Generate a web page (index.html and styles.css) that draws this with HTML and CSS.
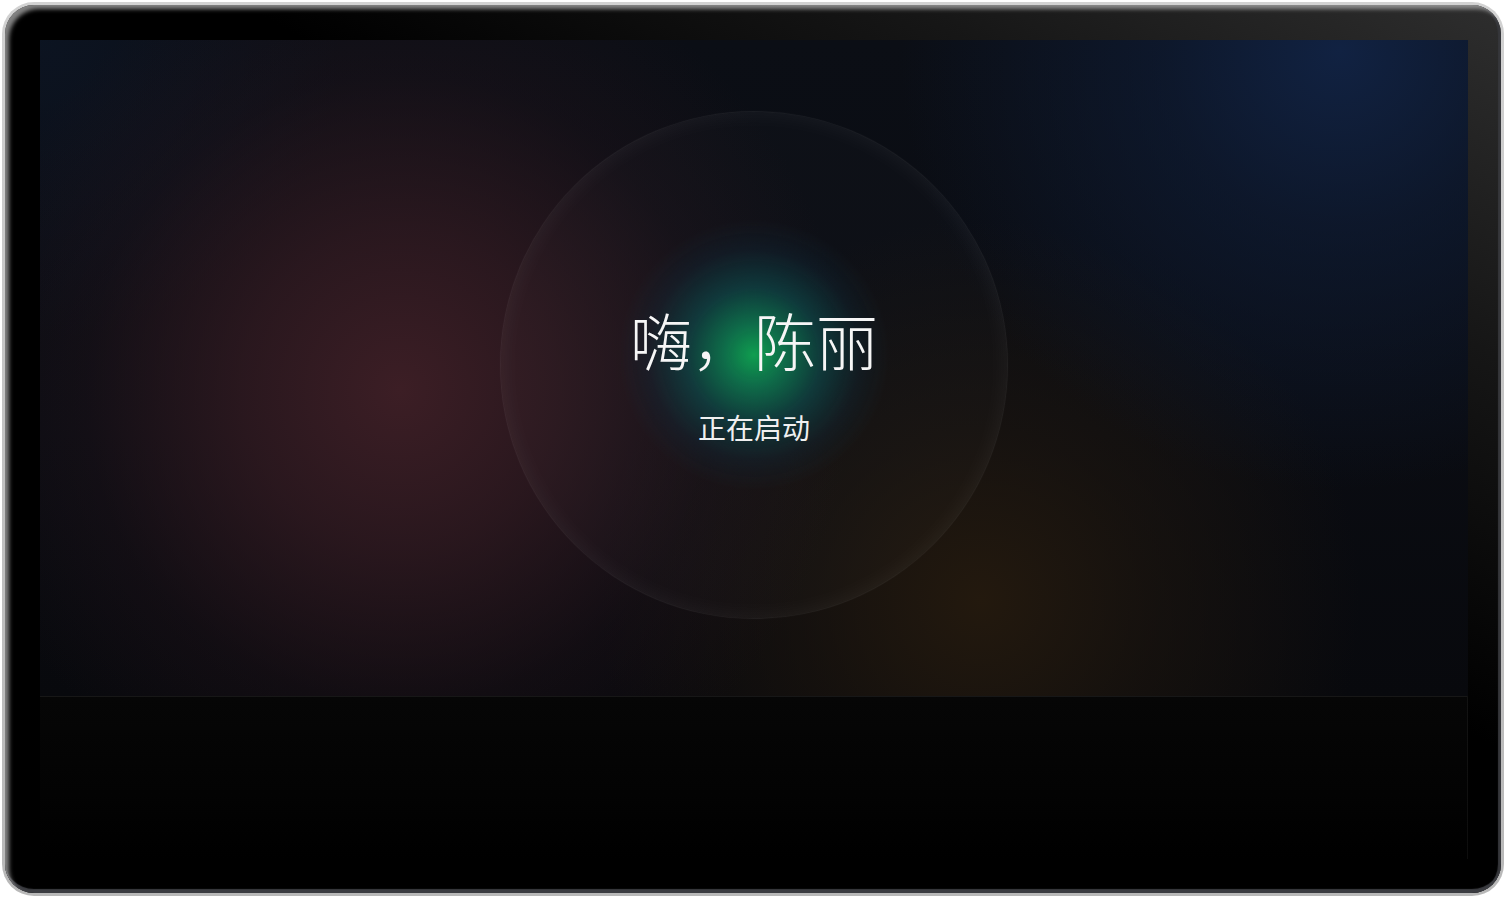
FILE: index.html
```html
<!DOCTYPE html>
<html lang="zh-CN">
<head>
<meta charset="utf-8">
<title>启动</title>
<link rel="stylesheet" href="styles.css">
</head>
<body>
<div class="device">
  <div class="bezel">
    <div class="screen">
      <div class="stage">
        <div class="orb">
          <div class="greeting">
            <div class="hello">嗨，陈丽</div>
            <div class="status">正在启动</div>
          </div>
        </div>
      </div>
      <div class="dock"></div>
    </div>
  </div>
</div>
</body>
</html>
```

FILE: styles.css
```css
html, body {
  margin: 0;
  padding: 0;
  background: #ffffff;
}

body {
  width: 1506px;
  height: 898px;
  overflow: hidden;
  font-family: "Noto Sans CJK SC", "Noto Sans", sans-serif;
}

.device {
  box-sizing: border-box;
  margin: 2px;
  width: 1502px;
  height: 894px;
  padding: 3px;
  border-radius: 32px;
  background: linear-gradient(180deg, #d2d2d2 0%, #c2c2c2 50%, #b8b8b8 100%);
  display: flex;
}

.bezel {
  box-sizing: border-box;
  flex: 1;
  display: flex;
  padding: 35px 33px 34px 35px;
  border-radius: 29px;
  background: linear-gradient(to bottom left, #2e2e2e 0%, #161616 20%, #000000 42%);
  box-shadow:
    inset 5px 5px 4px -1px rgba(175, 175, 175, 0.75),
    inset 0 -5px 1px -1px #3b3c41,
    inset -4px 0 1px -1px #36373b;
}

.screen {
  flex: 1;
  display: flex;
  flex-direction: column;
  background: #000;
}

.stage {
  flex: 0 0 656px;
  display: flex;
  align-items: center;
  justify-content: center;
  padding-bottom: 6px;
  box-sizing: border-box;
  background:
    radial-gradient(circle 450px at 360px 350px, rgba(60, 30, 37, 1) 0%, rgba(52, 27, 34, 0.75) 35%, rgba(40, 22, 30, 0.3) 70%, rgba(20, 15, 25, 0) 100%),
    radial-gradient(circle 440px at 1300px 10px, rgba(17, 34, 66, 1) 0%, rgba(15, 30, 58, 0.6) 40%, rgba(10, 18, 34, 0) 100%),
    radial-gradient(circle 380px at 940px 560px, rgba(35, 25, 14, 1) 0%, rgba(30, 22, 14, 0.6) 45%, rgba(20, 16, 14, 0) 100%),
    radial-gradient(circle 300px at 0px 0px, rgba(12, 20, 34, 0.9) 0%, rgba(12, 20, 34, 0) 100%),
    linear-gradient(180deg, #0b0e15 0%, #0a0c12 60%, #08090d 100%);
}

.orb {
  box-sizing: border-box;
  width: 508px;
  height: 508px;
  border-radius: 50%;
  display: flex;
  align-items: center;
  justify-content: center;
  border: 1px solid rgba(255, 255, 255, 0.05);
  background:
    radial-gradient(circle 135px at 50% 48%, rgba(16, 158, 80, 1) 0%, rgba(13, 125, 82, 0.85) 22%, rgba(12, 82, 82, 0.6) 50%, rgba(14, 48, 66, 0.28) 78%, rgba(14, 30, 50, 0) 100%),
    rgba(255, 255, 255, 0.016);
  box-shadow:
    inset 0 0 24px rgba(255, 255, 255, 0.06),
    0 0 2px rgba(255, 255, 255, 0.04);
}

.greeting {
  display: flex;
  flex-direction: column;
  align-items: center;
  gap: 34px;
  padding-top: 15px;
}

.hello {
  font-size: 62px;
  line-height: 74px;
  font-weight: 200;
  color: #f6f6f6;
  white-space: nowrap;
}

.status {
  font-size: 28px;
  line-height: 34px;
  font-weight: 400;
  color: #f0f0f0;
  white-space: nowrap;
}

.dock {
  flex: 1;
  border-top: 1px solid rgba(255, 255, 255, 0.09);
  border-right: 1px solid rgba(255, 255, 255, 0.05);
  background: linear-gradient(180deg, #060606 0%, #030303 60%, #000000 100%);
}
```
